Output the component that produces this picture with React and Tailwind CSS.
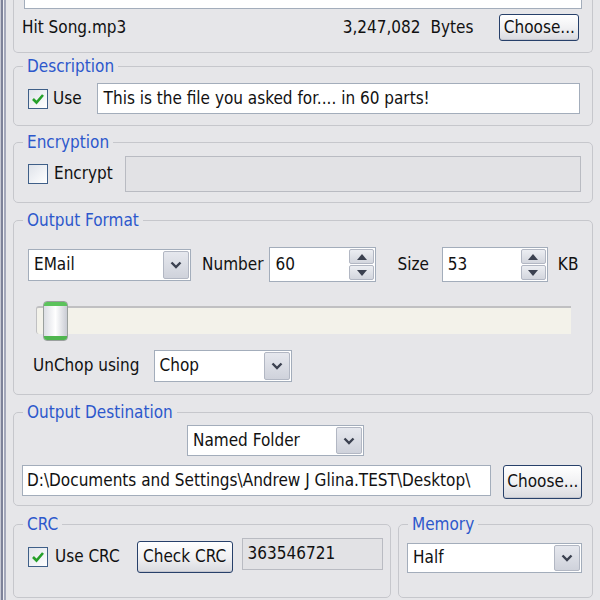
import React from "react";

const Chevron = () => (
  <svg width="12" height="8" viewBox="0 0 12 8">
    <polyline points="1.5,1.5 6,6 10.5,1.5" fill="none" stroke="#3b4150" strokeWidth="2.4" />
  </svg>
);

const Check = () => (
  <svg width="16" height="16" viewBox="0 0 16 16">
    <polyline points="3,8 6.5,11.5 13,4" fill="none" stroke="#25a02a" strokeWidth="2.6" />
  </svg>
);

function Checkbox({ checked }) {
  return (
    <div className="w-[20px] h-[20px] shrink-0 border border-[#3f5f88] bg-gradient-to-br from-[#dfe3ea] to-white flex items-center justify-center">
      {checked && <Check />}
    </div>
  );
}

function Select({ value, className }) {
  return (
    <div className={"flex bg-white border border-[#a3adbb] " + className}>
      <div className="flex-1 flex items-center pl-[5px] text-[#111]">{value}</div>
      <div className="w-[26px] m-[1px] rounded-[2px] border border-[#b2b7c3] bg-gradient-to-b from-[#e6e8ee] to-[#cfd2db] flex items-center justify-center">
        <Chevron />
      </div>
    </div>
  );
}

function Spin({ value, className }) {
  return (
    <div className={"flex bg-white border border-[#a3adbb] " + className}>
      <div className="flex-1 flex items-center pl-[5px]">{value}</div>
      <div className="w-[27px] flex flex-col gap-[1px] p-[1px]">
        <div className="flex-1 rounded-[2px] border border-[#b2b7c3] bg-gradient-to-b from-[#eceef2] to-[#d3d6de] flex items-center justify-center">
          <svg width="10" height="6" viewBox="0 0 10 6"><polygon points="0,6 5,0 10,6" fill="#3b4150" /></svg>
        </div>
        <div className="flex-1 rounded-[2px] border border-[#b2b7c3] bg-gradient-to-b from-[#eceef2] to-[#d3d6de] flex items-center justify-center">
          <svg width="10" height="6" viewBox="0 0 10 6"><polygon points="0,0 5,6 10,0" fill="#3b4150" /></svg>
        </div>
      </div>
    </div>
  );
}

function Button({ children, className }) {
  return (
    <div className={"shrink-0 flex items-center justify-center rounded-[3px] border border-[#27406a] bg-gradient-to-b from-white via-[#f1f1f3] to-[#d9dadf] shadow-[inset_0_-1px_0_#c4c6cf] " + className}>
      {children}
    </div>
  );
}

function Group({ label, className, children }) {
  return (
    <fieldset className={"min-w-0 border border-[#c6c7cc] rounded-[5px] " + className}>
      <legend className="ml-[9px] px-[4px] leading-[18px] text-[#2d58cc]">{label}</legend>
      {children}
    </fieldset>
  );
}

export default function App() {
  return (
    <div className="w-[600px] h-[600px] overflow-hidden flex bg-[#e6e6e9] text-[17px] text-[#111] font-['Liberation_Sans_Narrow','DejaVu_Sans_Condensed','Liberation_Sans',sans-serif]">
      <div className="flex shrink-0">
        <div className="w-[1px] bg-[#c8cad5]" />
        <div className="w-[2px] bg-[#7d8299]" />
        <div className="w-[1px] bg-[#eeeef2]" />
        <div className="w-[2px] bg-[#a4a8ba]" />
      </div>
      <div className="flex-1 flex flex-col pl-[7px] pr-[8px]">
        <div className="h-[53px] shrink-0 border-x border-b border-[#c6c7cc] rounded-b-[5px] flex flex-col">
          <div className="h-[9px] mx-[10px] bg-white border-x border-b border-[#a3adbb]" />
          <div className="mt-[5px] flex items-center pl-[8px] pr-[13px]">
            <span>Hit Song.mp3</span>
            <span className="ml-auto">3,247,082</span>
            <span className="ml-[10px]">Bytes</span>
            <Button className="ml-[26px] w-[80px] h-[27px]">Choose...</Button>
          </div>
        </div>

        <Group label="Description" className="mt-[4px]">
          <div className="flex items-center pt-[8px] pb-[11px] pl-[14px] pr-[12px]">
            <Checkbox checked />
            <span className="ml-[5px]">Use</span>
            <div className="ml-[15px] flex-1 h-[31px] bg-white border border-[#a3adbb] flex items-center pl-[6px]">
              This is the file you asked for.... in 60 parts!
            </div>
          </div>
        </Group>

        <Group label="Encryption" className="mt-[7px]">
          <div className="flex items-center pt-[5px] pb-[10px] pl-[14px] pr-[11px]">
            <Checkbox />
            <span className="ml-[6px]">Encrypt</span>
            <div className="ml-[12px] flex-1 h-[36px] bg-[#e2e2e5] border border-[#b9bbc2]" />
          </div>
        </Group>

        <Group label="Output Format" className="mt-[8px]">
          <div className="flex flex-col pt-[18px] pb-[12px] pl-[14px] pr-[14px]">
            <div className="flex items-center h-[35px]">
              <Select value="EMail" className="w-[163px] h-[32px]" />
              <span className="ml-[11px]">Number</span>
              <Spin value="60" className="ml-[6px] w-[107px] h-[35px]" />
              <span className="ml-[21px]">Size</span>
              <Spin value="53" className="ml-[13px] w-[106px] h-[35px]" />
              <span className="ml-[10px]">KB</span>
            </div>
            <div className="mt-[18px] h-[40px] ml-[8px] mr-[7px] flex items-center">
              <div className="relative flex-1 h-[28px] bg-[#f3f2ea] border-t-2 border-l border-[#c0c0c2] rounded-l-[3px]">
                <div className="absolute left-[6px] top-[-7px] w-[25px] h-[40px] rounded-[4px] border border-[#9aa09e] bg-gradient-to-r from-[#dcdee4] via-white to-[#c9ccd4] flex flex-col justify-between">
                  <div className="h-[4px] rounded-t-[3px] bg-[#5cc35c]" />
                  <div className="h-[4px] rounded-b-[3px] bg-[#4fb54f]" />
                </div>
              </div>
            </div>
            <div className="mt-[10px] flex items-center h-[32px]">
              <span className="ml-[5px]">UnChop using</span>
              <Select value="Chop" className="ml-[14px] w-[138px] h-[32px]" />
            </div>
          </div>
        </Group>

        <Group label="Output Destination" className="mt-[8px]">
          <div className="flex flex-col pt-[4px] pb-[6px] pl-[8px] pr-[10px]">
            <Select value="Named Folder" className="ml-[165px] w-[177px] h-[31px]" />
            <div className="mt-[9px] flex items-start">
              <div className="flex-1 h-[31px] bg-white border border-[#a3adbb] flex items-center pl-[4px] whitespace-nowrap overflow-hidden">
                D:\Documents and Settings\Andrew J Glina.TEST\Desktop\
              </div>
              <Button className="ml-[12px] w-[79px] h-[34px]">Choose...</Button>
            </div>
          </div>
        </Group>

        <div className="mt-[9px] flex gap-[7px]">
          <Group label="CRC" className="w-[378px] shrink-0">
            <div className="flex items-center pt-[7px] pb-[23px] pl-[14px] h-[64px]">
              <Checkbox checked />
              <span className="ml-[7px]">Use CRC</span>
              <Button className="ml-[17px] w-[96px] h-[32px]">Check CRC</Button>
              <div className="ml-[9px] w-[141px] h-[32px] self-start mt-[-2px] bg-[#e2e2e5] border border-[#b9bbc2] pl-[5px] pt-[2px]">
                363546721
              </div>
            </div>
          </Group>
          <Group label="Memory" className="flex-1">
            <div className="pt-[10px] pl-[8px] pr-[10px] h-[64px]">
              <Select value="Half" className="h-[30px]" />
            </div>
          </Group>
        </div>
      </div>
    </div>
  );
}
